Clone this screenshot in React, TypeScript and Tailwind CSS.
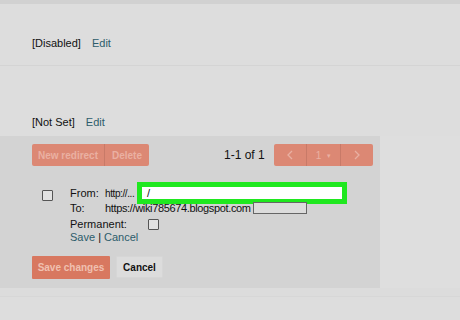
import React from 'react';

const Checkbox = () => (
    <span className="inline-block w-[11px] h-[11px] border border-[#555] bg-[#e2e2e2] rounded-[1px]" />
);

export default function App() {
    return (
        <div className="w-[460px] h-[320px] bg-[#dddddd] text-[11px] leading-[13px] text-[#111] font-['Liberation_Sans',Arial,sans-serif] overflow-hidden whitespace-nowrap">
            <div className="h-[4px] bg-[#d1d1d1]" />
            <div className="h-[62px] border-b border-[#d4d4d4] pt-[33px] pl-[32px] flex gap-[11px]">
                <span>[Disabled]</span>
                <span className="text-[#2c5c6b]">Edit</span>
            </div>
            <div className="h-[70px] pt-[50px] pl-[32px] flex gap-[11px]">
                <span>[Not Set]</span>
                <span className="text-[#2c5c6b]">Edit</span>
            </div>
            <div className="flex">
                <div className="w-[380px] h-[152px] bg-[#d3d3d3] pt-[8px]">
                    <div className="flex items-center h-[22px] pl-[32px]">
                        <div className="flex h-[22px] rounded-[2px] overflow-hidden">
                            <span className="w-[73px] bg-[#dc8874] text-[#eab0a2] font-bold text-[10px] flex items-center justify-center border-r border-[#c87a68]">
                                New redirect
                            </span>
                            <span className="w-[44px] bg-[#dc8874] text-[#eab0a2] font-bold text-[10px] flex items-center justify-center">
                                Delete
                            </span>
                        </div>
                        <span className="ml-[75px] w-[50px] text-[12px]">1-1 of 1</span>
                        <div className="flex h-[22px] rounded-[2px] overflow-hidden bg-[#dc8874] text-[#eab0a2]">
                            <span className="w-[33px] flex items-center justify-center border-r border-[#c87a68]">
                                <svg width="8" height="10" viewBox="0 0 8 10"><path d="M6 1 L2 5 L6 9" stroke="#e9b0a2" strokeWidth="1.3" fill="none" /></svg>
                            </span>
                            <span className="w-[34px] flex items-center justify-center gap-[6px] border-r border-[#c87a68] text-[10px]">
                                1<span className="text-[7px]">▾</span>
                            </span>
                            <span className="w-[32px] flex items-center justify-center">
                                <svg width="8" height="10" viewBox="0 0 8 10"><path d="M2 1 L6 5 L2 9" stroke="#e9b0a2" strokeWidth="1.3" fill="none" /></svg>
                            </span>
                        </div>
                    </div>
                    <div className="flex pl-[42px] pt-[16px]">
                        <div className="pt-[8px]">
                            <Checkbox />
                        </div>
                        <div className="ml-[17px] flex flex-col">
                            <div className="flex items-center h-[22px]">
                                <span className="w-[35px]">From:</span>
                                <span className="w-[32px] text-[10px] tracking-[-0.4px]">http://...</span>
                                <div className="w-[210px] h-[22px] border-[5px] border-[#1fe81f] bg-white flex items-center pl-[5px]">
                                    /
                                </div>
                            </div>
                            <div className="flex items-center h-[12px] -mt-[2px]">
                                <span className="w-[35px]">To:</span>
                                <span className="w-[146px] tracking-[-0.35px]">https://wiki785674.blogspot.com</span>
                                <span className="ml-[2px] w-[54px] h-[12px] border border-[#666] bg-[#dcdcdc]" />
                            </div>
                            <div className="flex items-center h-[14px] mt-[3px]">
                                <span className="w-[78px]">Permanent:</span>
                                <Checkbox />
                            </div>
                            <div className="text-[#2c5c6b]">
                                Save <span className="text-[#111]">|</span> Cancel
                            </div>
                        </div>
                    </div>
                    <div className="flex pl-[32px] pt-[12px] gap-[6px]">
                        <span className="w-[78px] h-[23px] bg-[#d87860] text-[#f0c0b0] font-bold text-[10px] flex items-center justify-center rounded-[1px]">
                            Save changes
                        </span>
                        <span className="w-[47px] h-[22px] bg-[#dcdcdc] border border-[#d6d6d6] font-bold text-[10px] flex items-center justify-center rounded-[1px]">
                            Cancel
                        </span>
                    </div>
                </div>
                <div className="flex-1 bg-[#dedede]" />
            </div>
            <div className="h-[9px] border-b border-[#d7d7d7] bg-[#dcdcdc]" />
        </div>
    );
}
